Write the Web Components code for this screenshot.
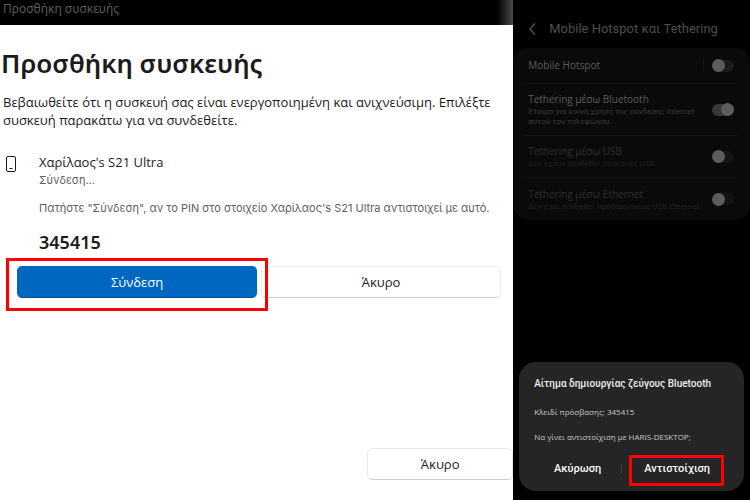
<!DOCTYPE html>
<html lang="el">
<head>
<meta charset="utf-8">
<title>Προσθήκη συσκευής</title>
<style>
    body
    {
        margin: 0;
        min-height: 100vh;
        background: #000;
        font-family: "Open Sans", "Noto Sans", sans-serif;
    }
</style>
</head>
<body>
<pairing-guide>
    <desktop-window slot="desktop" caption="Προσθήκη συσκευής">
        <device-card></device-card>
        <win-button slot="footer">Άκυρο</win-button>
    </desktop-window>
    <phone-screen slot="phone" caption="Mobile Hotspot και Tethering">
        <setting-row label="Mobile Hotspot" separated></setting-row>
        <setting-row label="Tethering μέσω Bluetooth" note="Έτοιμο για κοινή χρήση της σύνδεσης Internet αυτού του τηλεφώνου." checked></setting-row>
        <setting-row label="Tethering μέσω USB" note="Δεν έχουν συνδεθεί συσκευές USB" disabled></setting-row>
        <setting-row label="Tethering μέσω Ethernet" note="Δεν έχει συνδεθεί προσαρμογέας USB Ethernet" disabled></setting-row>
        <pair-dialog slot="dialog"></pair-dialog>
    </phone-screen>
</pairing-guide>

<script>
/**
 * base class: puts the static sTemplate of the subclass in an open shadow root
 */
class BaseElement extends HTMLElement
{
    constructor()
    {
        super();
        this.attachShadow({mode: "open"});

        const objTemplate = document.createElement("template");
        objTemplate.innerHTML = this.constructor.sTemplate;
        this.shadowRoot.appendChild(objTemplate.content.cloneNode(true));
    }

    /**
     * copy an attribute of the host to the text of an element in the shadow root
     */
    attributeToText(sAttrName, sSelector)
    {
        this.shadowRoot.querySelector(sSelector).textContent = this.getAttribute(sAttrName) || "";
    }
}

/**
 * desktop on the left, phone on the right
 */
class PairingGuide extends BaseElement
{
    static sTemplate = `
        <style>
            :host
            {
                display: grid;
                grid-template-columns: minmax(0, 13fr) minmax(0, 6fr);
                min-height: 100vh;
            }
        </style>
        <slot name="desktop"></slot>
        <slot name="phone"></slot>
    `;
}

/**
 * red frame drawn around the control the reader has to press
 */
class MarkFrame extends BaseElement
{
    static sTemplate = `
        <style>
            :host
            {
                display: grid;
                position: relative;
            }

            :host::after
            {
                content: "";
                position: absolute;
                inset: var(--mark-inset, -8px -11px -13px);
                border: 3px solid #fe0000;
                pointer-events: none;
                z-index: 1;
            }
        </style>
        <slot></slot>
    `;
}

class WinButton extends BaseElement
{
    static sTemplate = `
        <style>
            :host
            {
                display: grid;
            }

            button
            {
                height: 32px;
                padding: 0 8px;
                border: 1px solid #ebebeb;
                border-bottom-color: #cfcfcf;
                border-radius: 5px;
                background: #fff;
                color: #1b1b1b;
                font: inherit;
                font-size: 13px;
            }

            :host([primary]) button
            {
                border-color: #0067c0;
                border-bottom-color: #00519a;
                background: #0067c0;
                color: #fff;
            }
        </style>
        <button type="button"><slot></slot></button>
    `;
}

class DesktopWindow extends BaseElement
{
    static sTemplate = `
        <style>
            :host
            {
                display: flex;
                flex-direction: column;
                background: #fff;
                color: #1b1b1b;
                overflow: hidden;
            }

            header
            {
                height: 25px;
                padding-left: 3px;
                box-sizing: border-box;
                background: linear-gradient(to left, #4a4a4a, #000 16px);
                color: #5c5c5c;
                font-family: "Noto Sans", sans-serif;
                font-size: 12px;
                line-height: 18px;
            }

            main
            {
                flex: 1;
                padding: 20px 3px 0 1px;
            }

            h1
            {
                margin: 0 0 12px;
                font-family: "Noto Sans", sans-serif;
                font-size: 26px;
                font-weight: 600;
                line-height: 36px;
            }

            p
            {
                margin: 0 0 0 2px;
                font-size: 13px;
                line-height: 18px;
            }

            footer
            {
                display: grid;
                grid-template-columns: 146px;
                justify-content: end;
                padding-bottom: 20px;
            }
        </style>
        <header></header>
        <main>
            <h1></h1>
            <p>Βεβαιωθείτε ότι η συσκευή σας είναι ενεργοποιημένη και ανιχνεύσιμη. Επιλέξτε συσκευή παρακάτω για να συνδεθείτε.</p>
            <slot></slot>
        </main>
        <footer><slot name="footer"></slot></footer>
    `;

    connectedCallback()
    {
        this.attributeToText("caption", "header");
        this.attributeToText("caption", "h1");
    }
}

/**
 * the found device, with its PIN and the buttons to accept or refuse
 */
class DeviceCard extends BaseElement
{
    static sTemplate = `
        <style>
            :host
            {
                display: block;
                margin-top: 24px;
            }

            .device
            {
                display: grid;
                grid-template-columns: 38px minmax(0, 1fr);
            }

            svg
            {
                width: 12px;
                height: 18px;
                margin: 2px 0 0 4px;
            }

            h2, p
            {
                margin: 0;
                font-weight: 400;
            }

            h2
            {
                font-size: 13px;
                line-height: 18px;
            }

            p
            {
                color: #606060;
                font-family: Inter, "Noto Sans", sans-serif;
                font-size: 11px;
                line-height: 18px;
                white-space: nowrap;
            }

            .question
            {
                margin-top: 10px;
            }

            strong
            {
                display: block;
                margin-top: 12px;
                font-family: "Noto Sans", sans-serif;
                font-size: 18px;
                font-weight: 600;
                line-height: 26px;
            }

            .buttons
            {
                display: grid;
                grid-template-columns: 1fr 1fr;
                gap: 4px;
                margin: 11px 9px 0 16px;
            }
        </style>
        <section class="device">
            <svg viewBox="0 0 12 18" fill="none" stroke="#1b1b1b" aria-hidden="true">
                <rect x="1.5" y="1.5" width="9" height="15" rx="1.5"/>
                <path d="M4.5 13.5h3"/>
            </svg>
            <div>
                <h2>Χαρίλαος's S21 Ultra</h2>
                <p>Σύνδεση...</p>
                <p class="question">Πατήστε "Σύνδεση", αν το PIN στο στοιχείο Χαρίλαος's S21 Ultra αντιστοιχεί με αυτό.</p>
                <strong>345415</strong>
            </div>
        </section>
        <div class="buttons">
            <mark-frame><win-button primary>Σύνδεση</win-button></mark-frame>
            <win-button>Άκυρο</win-button>
        </div>
    `;
}

/**
 * phone settings, dimmed behind the dialog
 */
class PhoneScreen extends BaseElement
{
    static sTemplate = `
        <style>
            :host
            {
                display: flex;
                flex-direction: column;
                background: #000;
                color: #5a5a58;
                font-family: Roboto, "Noto Sans", sans-serif;
            }

            header
            {
                display: flex;
                align-items: center;
                gap: 12px;
                height: 38px;
                padding: 10px 0 0 15px;
                box-sizing: content-box;
            }

            header button
            {
                display: flex;
                padding: 0;
                border: 0;
                background: none;
                color: inherit;
            }

            h1
            {
                margin: 0;
                color: #4e4e4c;
                font-size: 13px;
                font-weight: 400;
                line-height: 18px;
                white-space: nowrap;
            }

            .list
            {
                margin-left: 1px;
                border-radius: 14px;
                background: #0a0a0a;
            }

            .dialog
            {
                margin: auto 6px 9px;
            }
        </style>
        <header>
            <button type="button" aria-label="Πίσω">
                <svg width="9" height="14" viewBox="0 0 9 14" fill="none" stroke="currentColor" stroke-width="1.2"><path d="M7 1.5 2 7l5 5.5"/></svg>
            </button>
            <h1></h1>
        </header>
        <div class="list"><slot></slot></div>
        <div class="dialog"><slot name="dialog"></slot></div>
    `;

    connectedCallback()
    {
        this.attributeToText("caption", "h1");
    }
}

class SettingRow extends BaseElement
{
    static sTemplate = `
        <style>
            :host
            {
                display: block;
                padding: 0 12px 0 11px;
            }

            label
            {
                display: flex;
                align-items: center;
                gap: 8px;
                min-height: 36px;
                padding: 0 4px 0 3px;
                box-sizing: border-box;
            }

            :host([note]) label
            {
                min-height: 42px;
            }

            :host([checked]) label
            {
                min-height: 52px;
            }

            :host(:not(:last-of-type)) label
            {
                border-bottom: 1px solid #121212;
            }

            .text
            {
                flex: 1;
                min-width: 0;
            }

            :host([separated]) .text
            {
                border-right: 1px solid #121212;
            }

            .label, .note
            {
                display: block;
            }

            .label
            {
                color: #5c5c5c;
                font-family: "Open Sans", "Noto Sans", sans-serif;
                font-size: 10px;
                line-height: 15px;
            }

            .note
            {
                color: #3a3a3a;
                font-size: 8px;
                line-height: 10px;
            }

            .note:empty
            {
                display: none;
            }

            :host([disabled]) .label
            {
                color: #2e2e2e;
            }

            :host([disabled]) .note
            {
                color: #222;
                white-space: nowrap;
            }

            input
            {
                appearance: none;
                flex: none;
                display: flex;
                align-items: center;
                width: 22px;
                height: 12px;
                margin: 0;
                border-radius: 6px;
                background: #1b1b1a;
            }

            input::before
            {
                content: "";
                width: 13px;
                height: 13px;
                flex: none;
                border-radius: 50%;
                background: #5c5c5c;
            }

            input:checked
            {
                justify-content: flex-end;
                background: #393936;
            }

            input:disabled
            {
                background: #131312;
            }
        </style>
        <label>
            <span class="text"><span class="label"></span><span class="note"></span></span>
            <input type="checkbox" role="switch">
        </label>
    `;

    connectedCallback()
    {
        const objInput = this.shadowRoot.querySelector("input");

        this.attributeToText("label", ".label");
        this.attributeToText("note", ".note");
        objInput.checked = this.hasAttribute("checked");
        objInput.disabled = this.hasAttribute("disabled");
    }
}

class PairDialog extends BaseElement
{
    static sTemplate = `
        <style>
            :host
            {
                display: block;
                padding: 13px 15px 10px;
                border-radius: 17px;
                background: #252525;
                color: #c8c8c8;
            }

            h2, p
            {
                margin: 0;
                white-space: nowrap;
            }

            h2
            {
                margin-bottom: 6px;
                color: #f0f0f0;
                font-size: 10px;
                font-weight: 500;
                line-height: 18px;
            }

            p
            {
                font-family: "Open Sans", "Noto Sans", sans-serif;
                font-size: 8px;
                line-height: 25px;
            }

            .buttons
            {
                display: grid;
                grid-template-columns: 87px 1px 94px;
                align-items: center;
                margin-top: 6px;
                justify-content: start;
            }

            .line
            {
                height: 9px;
                background: #444;
            }

            button
            {
                height: 26px;
                padding: 0;
                border: 0;
                background: none;
                color: #fafafa;
                font: inherit;
                font-size: 11px;
                font-weight: 500;
            }

            mark-frame
            {
                margin-left: 8px;
                margin-right: -8px;
                --mark-inset: 0 0 -5px -1px;
            }
        </style>
        <h2>Αίτημα δημιουργίας ζεύγους Bluetooth</h2>
        <p>Κλειδί πρόσβασης: 345415</p>
        <p>Να γίνει αντιστοίχιση με HARIS-DESKTOP;</p>
        <div class="buttons">
            <button type="button">Ακύρωση</button>
            <span class="line"></span>
            <mark-frame><button type="button">Αντιστοίχιση</button></mark-frame>
        </div>
    `;
}

/**
 * make components available in HTML
 */
customElements.define("mark-frame", MarkFrame);
customElements.define("win-button", WinButton);
customElements.define("device-card", DeviceCard);
customElements.define("desktop-window", DesktopWindow);
customElements.define("setting-row", SettingRow);
customElements.define("pair-dialog", PairDialog);
customElements.define("phone-screen", PhoneScreen);
customElements.define("pairing-guide", PairingGuide);
</script>
</body>
</html>
